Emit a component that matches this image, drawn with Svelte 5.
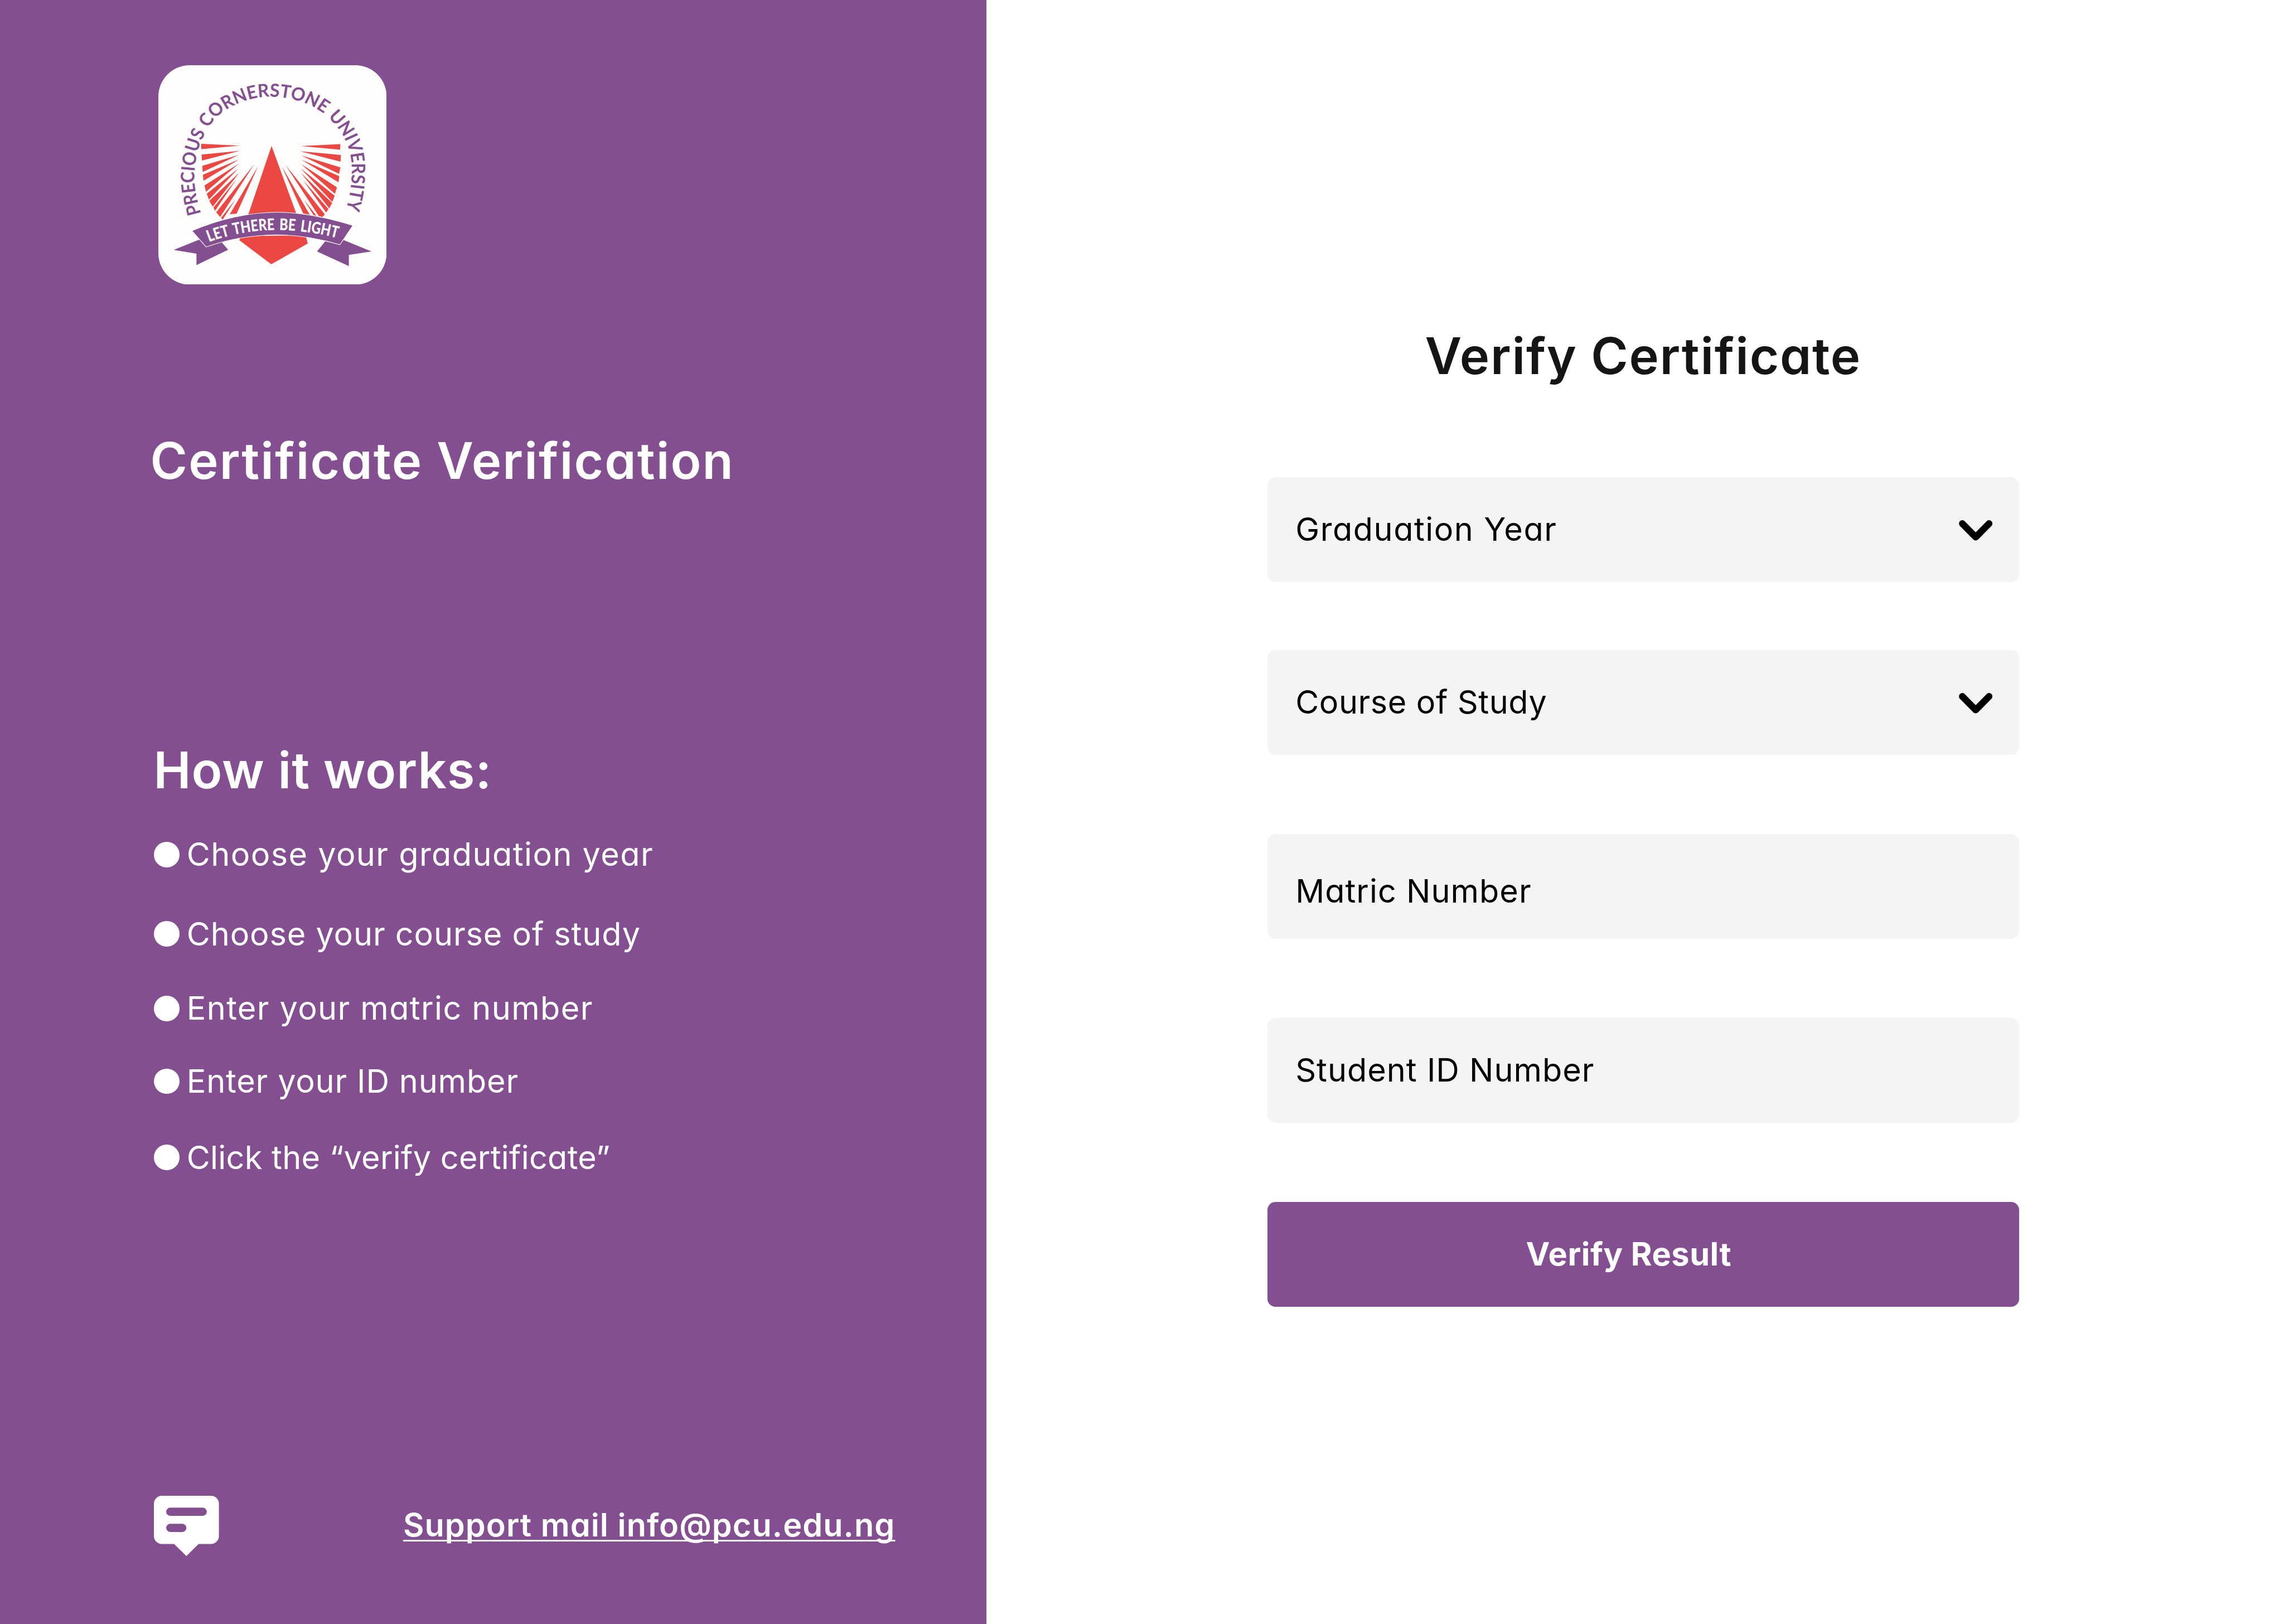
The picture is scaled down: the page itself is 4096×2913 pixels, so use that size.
<script>
  const steps = [
    { text: 'Choose your graduation year', cls: 'year' },
    { text: 'Choose your course of study', cls: 'course' },
    { text: 'Enter your matric number', cls: 'matric' },
    { text: 'Enter your ID number', cls: 'id' },
    { text: 'Click the “verify certificate”', cls: 'click' }
  ];

  const fields = [
    { label: 'Graduation Year', cls: 'f-year', select: true },
    { label: 'Course of Study', cls: 'f-course', select: true },
    { label: 'Matric Number', cls: 'f-matric', select: false },
    { label: 'Student ID Number', cls: 'f-id', select: false }
  ];

  // Light rays on either side of the crest
  const rays = [
    '322,582 567,594 323,617', '325,653 570,628 327,692', '329,727 563,655 332,768',
    '333,786 565,684 337,826', '343,857 563,712 353,898', '357,911 558,746 372,950',
    '374,958 566,771 396,996', '400,1003 549,813 411,1023', '418,1033 660,718 443,1064',
    '449,1070 543,946 459,1082', '505,1046 685,730 548,1042',
    '1210,584 958,597 1208,621', '1213,656 952,631 1211,700', '1210,737 960,658 1202,781',
    '1203,795 960,686 1198,836', '1188,869 958,714 1175,912', '1174,925 958,745 1158,965',
    '1157,972 960,775 1139,1007', '1134,1012 971,820 1119,1035', '1111,1047 860,722 1072,1058 1096,1064',
    '1057,1056 977,950 1039,1052', '1015,1050 836,730 973,1041'
  ];

  // Smooth curve through the points that carry the name ring
  function smooth(p) {
    let d = `M${p[0][0]} ${p[0][1]}`;
    for (let i = 0; i < p.length - 1; i++) {
      const a = p[i - 1] ?? p[i], b = p[i], c = p[i + 1], e = p[i + 2] ?? c;
      d += ` C${b[0] + (c[0] - a[0]) / 6} ${b[1] + (c[1] - a[1]) / 6} ${c[0] - (e[0] - b[0]) / 6} ${c[1] - (e[1] - b[1]) / 6} ${c[0]} ${c[1]}`;
    }
    return d;
  }
  const ring = smooth([
    [321, 1042], [284, 880], [282, 740], [316, 580], [400, 430], [490, 352], [605, 298], [725, 273],
    [850, 278], [975, 310], [1080, 365], [1160, 436], [1225, 525], [1262, 610], [1281, 710],
    [1279, 840], [1262, 950], [1235, 1060]
  ]);
</script>

<div class="page">
  <aside>
    <svg class="logo" viewBox="49 64 1456 1446" preserveAspectRatio="none" role="img" aria-label="Precious Cornerstone University">
      <defs>
        <path id="ring" d={ring} />
        <path id="motto" d="M372 1229 C500 1180 660 1150 800 1150 C940 1150 1080 1174 1205 1207" />
      </defs>
      <rect x="49" y="64" width="1456" height="1446" rx="200" ry="207" fill="#fffdfc" />
      <text class="ring" textLength="2108" lengthAdjust="spacingAndGlyphs"><textPath href="#ring" textLength="2108" lengthAdjust="spacingAndGlyphs">PRECIOUS CORNERSTONE UNIVERSITY</textPath></text>
      <g fill="#eb4743">
        {#each rays as points}
          <polygon {points} />
        {/each}
        <polygon points="771,596 622,1050 930,1045" />
        <polygon points="572,1190 566,1218 769,1376 1002,1239 988,1185" />
      </g>
      <g fill="#844f91">
        <polygon points="147,1281 310,1213 354,1262 452,1230 494,1280 292,1381 292,1306" />
        <polygon points="1408,1291 1230,1216 1207,1247 1115,1222 1061,1291 1264,1388 1264,1314" />
        <path stroke="#fffdfc" stroke-width="4" d="M263 1155 C440 1078 620 1035 800 1033 C970 1033 1140 1072 1290 1120 L1207 1247 C1070 1205 940 1182 800 1182 C640 1184 490 1212 354 1262Z" />
      </g>
      <text class="motto" textLength="832" lengthAdjust="spacingAndGlyphs"><textPath href="#motto" textLength="832" lengthAdjust="spacingAndGlyphs">LET THERE BE LIGHT</textPath></text>
    </svg>

    <h1>Certificate Verification</h1>
    <h2>How it works:</h2>
    <ul>
      {#each steps as step}
        <li class={step.cls}><i></i><span>{step.text}</span></li>
      {/each}
    </ul>

    <footer>
      <svg class="chat" viewBox="54 66 492 456" aria-hidden="true">
        <path fill="#fff" fill-rule="evenodd" d="M114 66H486A60 60 0 0 1 546 126V371A60 60 0 0 1 486 431H392L300 522L207 431H114A60 60 0 0 1 54 371V126A60 60 0 0 1 114 66ZM178 156A31 31 0 0 0 178 218H423A31 31 0 0 0 423 156ZM178 278A31 31 0 0 0 178 340H269A31 31 0 0 0 269 278Z" />
      </svg>
      <a href="mailto:info@pcu.edu.ng">Support mail info@pcu.edu.ng</a>
    </footer>
  </aside>

  <main>
    <h3>Verify Certificate</h3>
    <form>
      {#each fields as field}
        <div class="field {field.cls}">
          <span>{field.label}</span>
          {#if field.select}
            <svg class="chevron" viewBox="179 155 254 157" aria-hidden="true">
              <path d="M205 181L306 284L407 181" fill="none" stroke="#000" stroke-width="51" stroke-linecap="round" stroke-linejoin="round" />
            </svg>
          {/if}
        </div>
      {/each}
      <button type="button">Verify Result</button>
    </form>
  </main>
</div>

<style>
  :global(html) { font-size: 71.1111px; }
  :global(body) { margin: 0; background: #fff; }
  .page {
    display: flex;
    height: 100vh;
    overflow: hidden;
    font-family: Inter, 'Open Sans', sans-serif;
    font-feature-settings: 'cv11';
    font-size: 0.81rem;
    line-height: 1rem;
    white-space: nowrap;
  }
  aside {
    box-sizing: border-box;
    width: 24.88rem;
    flex: none;
    padding: 1.645rem 0 0 3.84rem;
    background: #844f91;
    color: #fff;
  }
  .logo { display: block; width: 5.757rem; height: 5.534rem; margin-left: 0.154rem; }
  .ring { font: 700 119px Lato, sans-serif; word-spacing: 0.04em; fill: #844f91; }
  .motto { font: 900 106px Lato, sans-serif; word-spacing: 0.12em; fill: #fffdfc; }
  h1, h2, h3 { margin: 0; font-size: 1.27rem; font-weight: 600; line-height: 1.6rem; }
  h1 { margin: 3.65rem 0 0 -0.05rem; letter-spacing: 0.0235em; }
  h2 { margin: 6.2rem 0 0 0.03rem; letter-spacing: 0.0109em; }
  ul { margin: 0.828rem 0 0 0.042rem; padding: 0; list-style: none; }
  li { display: flex; align-items: center; height: 1rem; gap: 0.185rem; }
  li i { width: 0.64rem; height: 0.64rem; border-radius: 50%; background: #fff; }
  .year { letter-spacing: 0.0253em; }
  .course { margin-top: 1rem; letter-spacing: 0.016em; }
  .matric { margin-top: 0.88rem; letter-spacing: 0.0246em; }
  .id { margin-top: 0.84rem; letter-spacing: 0.0148em; }
  .click { margin-top: 0.92rem; letter-spacing: 0.0051em; }
  footer { display: flex; align-items: flex-start; margin: 8.027rem 0 0 0.042rem; }
  .chat { width: 1.64rem; height: 1.52rem; }
  a {
    margin: 0.253rem 0 0 4.645rem;
    color: #fff;
    font-weight: 600;
    letter-spacing: 0.0185em;
    text-decoration: underline;
    text-decoration-thickness: 0.042rem;
    text-underline-offset: 0.08rem;
    text-decoration-skip-ink: none;
  }
  main { width: 18.96rem; padding: 8.185rem 0 0 7.08rem; }
  h3 { color: #151515; text-align: center; letter-spacing: 0.0195em; }
  form { display: flex; flex-direction: column; margin-top: 2.255rem; }
  .field {
    display: flex;
    align-items: center;
    justify-content: space-between;
    box-sizing: border-box;
    height: 2.64rem;
    padding: 0 0.67rem 0 0.71rem;
    border-radius: 0.2rem;
    background: #f3f4f6;
    color: #000;
  }
  .chevron { width: 0.847rem; height: 0.523rem; margin-top: 0.04rem; }
  .f-year { letter-spacing: 0.0268em; }
  .f-course { margin-top: 1.72rem; letter-spacing: 0.0104em; }
  .f-matric { margin-top: 2rem; padding-top: 0.24rem; letter-spacing: 0.0179em; }
  .f-id { margin-top: 2rem; letter-spacing: 0.0174em; }
  button {
    height: 2.64rem;
    margin-top: 2rem;
    padding: 0 0.73rem 0 0;
    border: 0;
    border-radius: 0.2rem;
    background: #844f91;
    color: #fff;
    font: inherit;
    font-weight: 700;
    font-feature-settings: inherit;
    letter-spacing: 0.0095em;
  }
</style>
